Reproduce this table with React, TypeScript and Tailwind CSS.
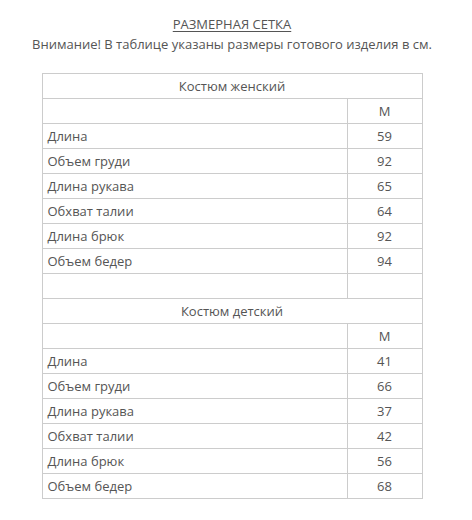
const sections = [
  {
    title: "Костюм женский",
    rows: [
      ["Длина", "59"],
      ["Объем груди", "92"],
      ["Длина рукава", "65"],
      ["Обхват талии", "64"],
      ["Длина брюк", "92"],
      ["Объем бедер", "94"],
    ],
  },
  {
    title: "Костюм детский",
    rows: [
      ["Длина", "41"],
      ["Объем груди", "66"],
      ["Длина рукава", "37"],
      ["Обхват талии", "42"],
      ["Длина брюк", "56"],
      ["Объем бедер", "68"],
    ],
  },
]

const cell = "h-[25px] border border-[#cccccc] px-[5px] py-0 align-middle"

export default function App() {
  return (
    <div className="w-[464px] bg-white pt-[14px] text-[13px] leading-[20px] text-[#555555] [font-family:'Open_Sans',sans-serif]">
      <div className="text-center">
        <span className="underline underline-offset-[2px]">РАЗМЕРНАЯ СЕТКА</span>
      </div>
      <div className="text-center">Внимание! В таблице указаны размеры готового изделия в см.</div>

      <table className="mx-auto mt-[19px] w-[381px] border-collapse">
        <tbody>
          {sections.map((section, s) => (
            <>
              {s > 0 ? (
                <tr key={`gap-${s}`}>
                  <td className={cell}></td>
                  <td className={cell}></td>
                </tr>
              ) : null}
              <tr key={`title-${s}`}>
                <td colSpan={2} className={`${cell} text-center`}>
                  {section.title}
                </td>
              </tr>
              <tr key={`size-${s}`}>
                <td className={`${cell} w-[305px]`}></td>
                <td className={`${cell} text-center`}>М</td>
              </tr>
              {section.rows.map(([label, value]) => (
                <tr key={`${s}-${label}`}>
                  <td className={cell}>{label}</td>
                  <td className={`${cell} text-center`}>{value}</td>
                </tr>
              ))}
            </>
          ))}
        </tbody>
      </table>
      <div className="h-[19px]"></div>
    </div>
  )
}
